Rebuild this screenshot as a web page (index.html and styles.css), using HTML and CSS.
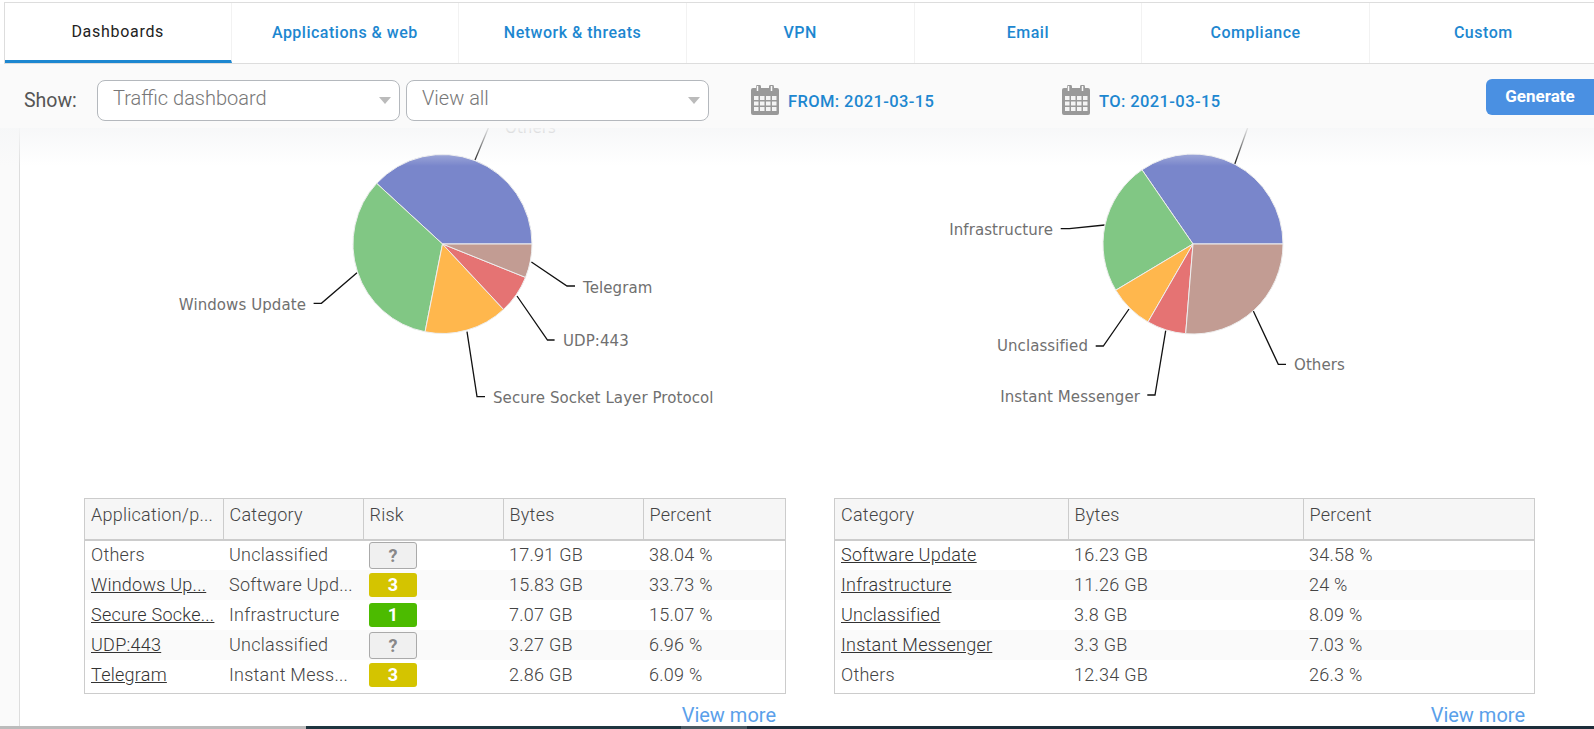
FILE: index.html
```html
<!DOCTYPE html>
<html lang="en">
<head>
    <meta charset="UTF-8">
    <meta name="viewport" content="width=device-width, initial-scale=1.0">
    <title>Traffic dashboard</title>
    <link rel="stylesheet" href="styles.css">
</head>
<body>
    <svg class="defs" width="0" height="0">
        <symbol id="calendar" viewBox="0 0 28 30">
            <path fill="#999" d="M2 3h3V2a2.500 2.500 0 0 1 5 0v1h8V2a2.500 2.500 0 0 1 5 0v1h3a2 2 0 0 1 2 2v23a2 2 0 0 1-2 2H2a2 2 0 0 1-2-2V5a2 2 0 0 1 2-2z"/>
            <path fill="none" stroke="#fafafa" d="M6.500 1v5M20.500 1v5" stroke-width="1.500"/>
            <g fill="#f4f4f4">
                <rect x="3" y="11" width="4.500" height="4"/><rect x="9" y="11" width="4.500" height="4"/><rect x="15" y="11" width="4.500" height="4"/><rect x="21" y="11" width="4.500" height="4"/>
                <rect x="3" y="16.500" width="4.500" height="4"/><rect x="9" y="16.500" width="4.500" height="4"/><rect x="15" y="16.500" width="4.500" height="4"/><rect x="21" y="16.500" width="4.500" height="4"/>
                <rect x="3" y="22" width="4.500" height="4"/><rect x="9" y="22" width="4.500" height="4"/><rect x="15" y="22" width="4.500" height="4"/><rect x="21" y="22" width="4.500" height="4"/>
            </g>
        </symbol>
    </svg>

    <nav class="tabs">
        <a class="tab active">Dashboards</a>
        <a class="tab">Applications &amp; web</a>
        <a class="tab">Network &amp; threats</a>
        <a class="tab">VPN</a>
        <a class="tab">Email</a>
        <a class="tab">Compliance</a>
        <a class="tab">Custom</a>
    </nav>

    <div class="toolbar">
        <span class="show-label">Show:</span>
        <div class="select">Traffic dashboard</div>
        <div class="select second">View all</div>
        <div class="date from">
            <svg class="cal-icon"><use href="#calendar"/></svg>
            <span>FROM: 2021-03-15</span>
        </div>
        <div class="date to">
            <svg class="cal-icon"><use href="#calendar"/></svg>
            <span>TO: 2021-03-15</span>
        </div>
        <button class="generate" type="button">Generate</button>
    </div>

    <main class="content">
        <div class="fade"></div>

        <div class="charts">
            <svg class="chart" width="780" height="370" viewBox="20 128 780 370">
                <g class="leaders">
                    <path d="M475 160L490 124H497"/>
                    <path d="M531.400 262L567 286H575"/>
                    <path d="M517 296L547.500 340H554.600"/>
                    <path d="M467 331.700L477 396.700H485"/>
                    <path d="M357 272.700L321.400 303.300H313.600"/>
                </g>
                <g class="slices" transform="translate(0.5 0)">
                    <path fill="#7986cb" d="M442 244L376.170 183.360A89.500 89.500 0 0 1 531.500 244Z"/>
                    <path fill="#81c784" d="M442 244L424.570 331.780A89.500 89.500 0 0 1 376.170 183.360Z"/>
                    <path fill="#ffb74d" d="M442 244L503.070 309.430A89.500 89.500 0 0 1 424.570 331.780Z"/>
                    <path fill="#e57373" d="M442 244L525 277.400A89.500 89.500 0 0 1 503.070 309.430Z"/>
                    <path fill="#c29c93" d="M442 244L531.500 244A89.500 89.500 0 0 1 525 277.400Z"/>
                </g>
                <g class="labels">
                    <text x="505" y="133">Others</text>
                    <text x="583" y="293">Telegram</text>
                    <text x="563" y="346">UDP:443</text>
                    <text x="493" y="403">Secure Socket Layer Protocol</text>
                    <text x="306" y="310" text-anchor="end">Windows Update</text>
                </g>
            </svg>
            <svg class="chart" width="794" height="370" viewBox="800 128 794 370">
                <g class="leaders">
                    <path d="M1234.700 164.300L1249 124"/>
                    <path d="M1104.700 225L1069.300 228.700H1060.700"/>
                    <path d="M1129 309L1103.300 346H1095.700"/>
                    <path d="M1165.700 330.700L1155 395H1147.300"/>
                    <path d="M1253.300 311L1278.300 364.300H1286"/>
                </g>
                <g class="slices" transform="translate(1 0)">
                    <path fill="#7986cb" d="M1192 244L1141 169.820A90 90 0 0 1 1282 244Z"/>
                    <path fill="#81c784" d="M1192 244L1114.770 290.200A90 90 0 0 1 1141 169.820Z"/>
                    <path fill="#ffb74d" d="M1192 244L1147 321.950A90 90 0 0 1 1114.770 290.200Z"/>
                    <path fill="#e57373" d="M1192 244L1184.660 333.700A90 90 0 0 1 1147 321.950Z"/>
                    <path fill="#c29c93" d="M1192 244L1282 244A90 90 0 0 1 1184.660 333.700Z"/>
                </g>
                <g class="labels">
                    <text x="1053" y="235" text-anchor="end">Infrastructure</text>
                    <text x="1088" y="351" text-anchor="end">Unclassified</text>
                    <text x="1140" y="402" text-anchor="end">Instant Messenger</text>
                    <text x="1294" y="370">Others</text>
                </g>
            </svg>
        </div>

        <div class="tables">
            <section class="report report-apps">
                <div class="grid-box">
                    <table class="grid">
                        <thead>
                            <tr><th>Application/p...</th><th>Category</th><th>Risk</th><th>Bytes</th><th>Percent</th></tr>
                        </thead>
                        <tbody>
                            <tr><td>Others</td><td>Unclassified</td><td class="risk-cell"><span class="risk unknown">?</span></td><td>17.91 GB</td><td>38.04 %</td></tr>
                            <tr><td><a>Windows Up...</a></td><td>Software Upd...</td><td class="risk-cell"><span class="risk medium">3</span></td><td>15.83 GB</td><td>33.73 %</td></tr>
                            <tr><td><a>Secure Socke...</a></td><td>Infrastructure</td><td class="risk-cell"><span class="risk low">1</span></td><td>7.07 GB</td><td>15.07 %</td></tr>
                            <tr><td><a>UDP:443</a></td><td>Unclassified</td><td class="risk-cell"><span class="risk unknown">?</span></td><td>3.27 GB</td><td>6.96 %</td></tr>
                            <tr><td><a>Telegram</a></td><td>Instant Mess...</td><td class="risk-cell"><span class="risk medium">3</span></td><td>2.86 GB</td><td>6.09 %</td></tr>
                        </tbody>
                    </table>
                </div>
                <a class="view-more">View more</a>
            </section>

            <section class="report report-cats">
                <div class="grid-box">
                    <table class="grid">
                        <thead>
                            <tr><th>Category</th><th>Bytes</th><th>Percent</th></tr>
                        </thead>
                        <tbody>
                            <tr><td><a>Software Update</a></td><td>16.23 GB</td><td>34.58 %</td></tr>
                            <tr><td><a>Infrastructure</a></td><td>11.26 GB</td><td>24 %</td></tr>
                            <tr><td><a>Unclassified</a></td><td>3.8 GB</td><td>8.09 %</td></tr>
                            <tr><td><a>Instant Messenger</a></td><td>3.3 GB</td><td>7.03 %</td></tr>
                            <tr><td>Others</td><td>12.34 GB</td><td>26.3 %</td></tr>
                        </tbody>
                    </table>
                </div>
                <a class="view-more">View more</a>
            </section>
        </div>
    </main>

    <div class="taskbar">
        <span class="taskbar-grey"></span>
        <span class="taskbar-dark"></span>
        <span class="taskbar-app"></span>
        <span class="taskbar-rest"></span>
    </div>
</body>
</html>
```

FILE: styles.css
```css
html, body {
    height: 100%;
}

body {
    margin: 0;
    display: flex;
    flex-direction: column;
    height: 729px;
    overflow: hidden;
    background: white;
    font-family: 'Roboto', sans-serif;
    font-size: 18px;
    color: #555;
}

.defs {
    display: none;
}

/* tabs */
.tabs {
    display: flex;
    flex: none;
    box-sizing: border-box;
    height: 62px;
    margin: 2px 0 0 4px;
    border-top: 1px solid #ddd;
    border-left: 1px solid #ddd;
    border-bottom: 1px solid #ddd;
}

.tab {
    display: flex;
    flex: none;
    align-items: center;
    justify-content: center;
    box-sizing: border-box;
    width: 227.700px;
    padding-bottom: 2px;
    border-right: 1px solid #f2f2f2;
    font-size: 16px;
    font-weight: 500;
    letter-spacing: 0.5px;
    color: #1d87d0;
}

.tab.active {
    width: 226.500px;
    padding-bottom: 0;
    border-bottom: 3px solid #1d87d0;
    color: #222;
    font-weight: 400;
    letter-spacing: 0.7px;
}

/* toolbar */
.toolbar {
    display: flex;
    flex: none;
    align-items: flex-start;
    height: 64px;
    background: #fafafa;
    position: relative;
    z-index: 2;
}

.show-label {
    margin: 26px 0 0 24px;
    width: 73px;
    font-size: 19.500px;
    line-height: 22px;
}

.select {
    position: relative;
    box-sizing: border-box;
    width: 303px;
    height: 41px;
    margin-top: 16px;
    padding: 5px 0 0 15px;
    border: 1px solid #b4b8bd;
    border-radius: 8px;
    background: white;
    color: #777;
    font-size: 20px;
    font-weight: 300;
    line-height: 24px;
}

.select::after {
    content: '';
    position: absolute;
    right: 8px;
    top: 16px;
    border-left: 6px solid transparent;
    border-right: 6px solid transparent;
    border-top: 7px solid #bbb;
}

.select.second {
    margin-left: 6px;
}

.date {
    display: flex;
    align-items: flex-start;
    margin-top: 21px;
    color: #1d87d0;
    font-size: 16.500px;
    font-weight: 500;
    letter-spacing: 0.4px;
}

.date span {
    margin: 6px 0 0 9px;
    line-height: 22px;
    white-space: nowrap;
}

.date.from {
    margin-left: 42px;
}

.date.to {
    position: absolute;
    left: 1062px;
}

.cal-icon {
    width: 28px;
    height: 30px;
}

.generate {
    position: absolute;
    left: 1486px;
    top: 15px;
    width: 108px;
    height: 36px;
    padding: 0 0 2px 0;
    border: none;
    border-radius: 6px 0 0 6px;
    background: #4a90e2;
    color: white;
    font-family: inherit;
    font-size: 17px;
    font-weight: 700;
}

/* main area */
.content {
    position: relative;
    flex: 1;
    overflow: hidden;
    background: white;
    padding-left: 20px;
}

.content::before {
    content: '';
    position: absolute;
    left: 0;
    top: 0;
    bottom: 0;
    width: 19px;
    background: #fafafa;
    border-right: 1px solid #ddd;
}

.fade {
    position: absolute;
    left: 0;
    right: 0;
    top: 0;
    height: 38px;
    background: linear-gradient(rgba(246, 247, 248, 0.93), rgba(246, 247, 248, 0));
}

.charts {
    display: flex;
    height: 370px;
}

.chart {
    display: block;
    flex: none;
}

.slices path {
    stroke: #eee;
    stroke-width: 1;
}

.leaders path {
    fill: none;
    stroke: #111;
    stroke-width: 1.300;
}

.labels text {
    font-family: 'DejaVu Sans', sans-serif;
    font-size: 15px;
    letter-spacing: 0.08px;
    fill: #707070;
}

.tables {
    display: flex;
    margin-left: 64px;
    gap: 48px;
}

.report {
    display: flex;
    flex-direction: column;
}

.report-apps {
    width: 702px;
}

.report-cats {
    width: 701px;
}

.report-apps th {
    width: 140px;
}

.report-apps th:first-child {
    width: 138px;
}

.report-apps th:last-child {
    width: auto;
}

.report-cats th:first-child {
    width: 233px;
}

.report-cats th:nth-child(2) {
    width: 235px;
}

.grid-box {
    border: 1px solid #ccc;
    padding-bottom: 3px;
}

.grid {
    width: 100%;
    table-layout: fixed;
    border-collapse: collapse;
    color: #444;
    font-weight: 300;
    letter-spacing: 0.25px;
}

.grid th {
    box-sizing: border-box;
    height: 41px;
    padding: 0 0 10px 6px;
    background: #f6f6f6;
    border-bottom: 2px solid #ccc;
    border-left: 1px solid #ccc;
    font-weight: 300;
    text-align: left;
    white-space: nowrap;
}

.grid th:first-child {
    border-left: none;
}

.grid td {
    box-sizing: border-box;
    height: 30px;
    padding: 0 0 2px 6px;
    white-space: nowrap;
}

.grid td.risk-cell {
    padding-bottom: 0;
}

.grid tbody tr:nth-child(even) {
    background: #fafafa;
}

.grid a {
    color: #333;
    text-decoration: underline;
}

.risk {
    display: block;
    box-sizing: border-box;
    width: 48px;
    height: 24px;
    border-radius: 3px;
    color: white;
    font-weight: 700;
    text-align: center;
    line-height: 24px;
}

.risk.medium {
    background: #d4c400;
}

.risk.low {
    background: #4cbb00;
}

.risk.unknown {
    height: 27px;
    background: #f0f0f0;
    border: 1px solid #aaa;
    color: #888;
    line-height: 25px;
}

.view-more {
    align-self: flex-end;
    margin: 11px 10px 0 0;
    color: #5aa0ea;
    font-size: 20px;
    line-height: 20px;
}

/* strip at the very bottom */
.taskbar {
    display: flex;
    flex: none;
    height: 3px;
    position: relative;
    z-index: 3;
}

.taskbar-grey {
    width: 306px;
    background: #bbb;
}

.taskbar-dark {
    width: 375px;
    background: #1f3640;
}

.taskbar-app {
    width: 66px;
    background: #4a5a62;
}

.taskbar-rest {
    flex: 1;
    background: #1c2d3a;
}
```
